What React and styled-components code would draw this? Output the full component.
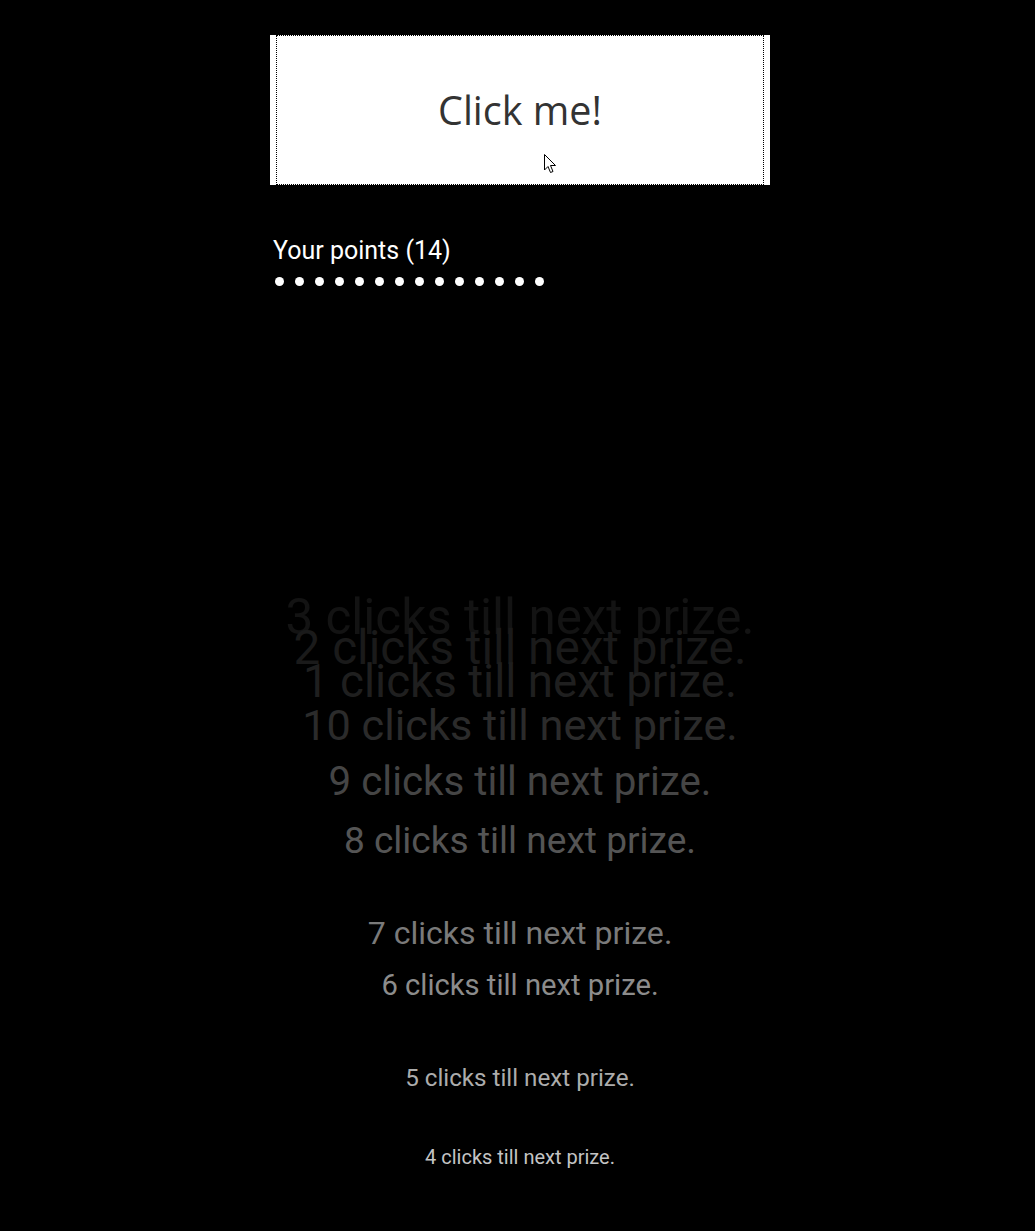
import React from 'react';
import styled, { createGlobalStyle } from 'styled-components';

const GlobalStyle = createGlobalStyle`
  html, body {
    margin: 0;
    padding: 0;
    background: #000;
  }
  body {
    font-family: Roboto, "Liberation Sans", sans-serif;
  }
`

const Page = styled.div`
  min-height: 1231px;
  padding: 35px 0 0 5px;
  box-sizing: border-box;
  background: #000;
`

const Column = styled.div`
  width: 500px;
  margin: 0 auto;
  display: flex;
  flex-direction: column;
`

const ClickButton = styled.button`
  position: relative;
  width: 500px;
  height: 150px;
  margin: 0;
  padding: 0;
  border: none;
  background: #fff;
  color: #333;
  font-family: "Open Sans", "Noto Sans", sans-serif;
  font-size: 39.5px;
  cursor: pointer;

  &::after {
    content: '';
    position: absolute;
    top: 0;
    bottom: 0;
    left: 6px;
    right: 6px;
    border: 1px dotted #000;
  }
`

const Cursor = styled.svg`
  position: absolute;
  left: 274px;
  top: 119px;
  width: 13px;
  height: 20px;
`

const Points = styled.div`
  margin-top: 51px;
  padding-left: 3px;
  color: #fff;
`

const PointsTitle = styled.div`
  font-size: 25px;
  line-height: 30px;
`

const DotRow = styled.div`
  display: flex;
  gap: 11px;
  margin-top: 11px;
  padding-left: 2px;
`

const Dot = styled.span`
  width: 9px;
  height: 9px;
  border-radius: 50%;
  background: #fff;
`

const Messages = styled.div`
  margin-top: 307px;
  display: flex;
  flex-direction: column;
  align-items: center;
`

const Message = styled.div`
  font-size: ${p => p.size}px;
  line-height: 1;
  color: ${p => p.tone};
  margin-top: ${p => p.gap}px;
  white-space: nowrap;
`

const messages = [
  { n: 3, size: 49.4, tone: '#131313', gap: 0 },
  { n: 2, size: 47.7, tone: '#1a1a1a', gap: -17 },
  { n: 1, size: 45.7, tone: '#1f1f1f', gap: -14 },
  { n: 10, size: 43.3, tone: '#2b2b2b', gap: -0.7 },
  { n: 9, size: 40.3, tone: '#454545', gap: 14.3 },
  { n: 8, size: 37.1, tone: '#555555', gap: 20.4 },
  { n: 7, size: 32.1, tone: '#7a7a7a', gap: 57.1 },
  { n: 6, size: 29.2, tone: '#8c8c8c', gap: 22.3 },
  { n: 5, size: 24.2, tone: '#acacac', gap: 66 },
  { n: 4, size: 20, tone: '#c4c4c4', gap: 56.4 },
];

const App = () => {
  return (
    <Page>
      <GlobalStyle />
      <Column>
        <ClickButton>
          Click me!
          <Cursor viewBox="0 0 13 20">
            <path d="M0.5 0.5 L0.5 16 L4 12.5 L6.5 18.5 L9 17.5 L6.5 11.5 L11.5 11.5 Z" fill="#fff" stroke="#000" strokeWidth="1" strokeLinejoin="miter" />
          </Cursor>
        </ClickButton>
        <Points>
          <PointsTitle>Your points (14)</PointsTitle>
          <DotRow>
            {Array.from({ length: 14 }).map((_, i) => <Dot key={i} />)}
          </DotRow>
        </Points>
        <Messages>
          {messages.map(m => (
            <Message key={m.n} size={m.size} tone={m.tone} gap={m.gap}>
              {m.n} clicks till next prize.
            </Message>
          ))}
        </Messages>
      </Column>
    </Page>
  );
}

export default App;
